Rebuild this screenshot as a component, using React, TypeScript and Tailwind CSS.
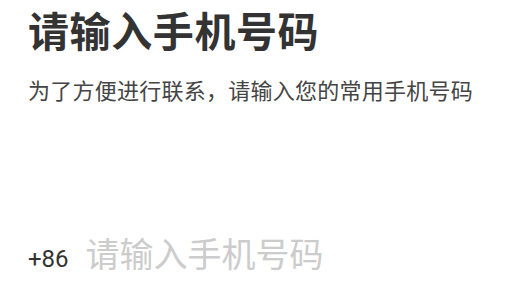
import React from 'react';

const font = { fontFamily: '"Noto Sans CJK SC", "Noto Sans", sans-serif' };

export default function App() {
  const [phone, setPhone] = React.useState('');

  return (
    <div className="w-[516px] h-[286px] bg-white px-[28px] overflow-hidden" style={font}>
      <h1 className="pt-[2px] text-[41px] leading-[54px] font-bold tracking-[0.6px] text-[#333333]">请输入手机号码</h1>
      <p className="mt-[20px] text-[22px] leading-[26px] tracking-[0.25px] text-[#444444]">为了方便进行联系，请输入您的常用手机号码</p>
      <div className="mt-[129px] flex items-baseline gap-[17px]">
        <span className="text-[24px] leading-[40px] text-[#333333]" style={{ fontFamily: 'Roboto, "Noto Sans", sans-serif' }}>+86</span>
        <input
          className="flex-1 min-w-0 outline-none text-[34px] leading-[44px] text-[#333333] placeholder:text-[#cccccc] bg-transparent"
          placeholder="请输入手机号码"
          value={phone}
          onChange={(e) => setPhone(e.target.value)}
        />
      </div>
    </div>
  );
}
